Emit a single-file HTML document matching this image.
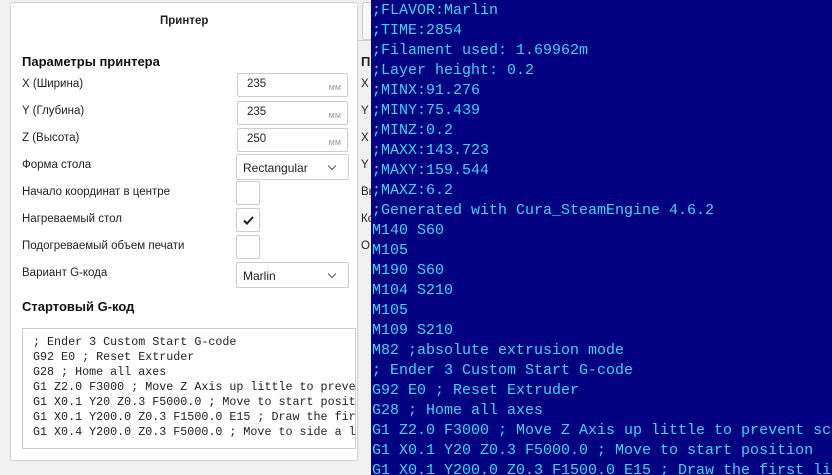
<!DOCTYPE html>
<html><head><meta charset="utf-8"><style>
*{margin:0;padding:0;box-sizing:border-box}
body{width:832px;height:475px;overflow:hidden;background:#f0f0f0;position:relative;font-family:"Liberation Sans","Noto Sans CJK SC",sans-serif;font-size:11.5px;color:#222}
.card{position:absolute;left:10px;top:2px;width:348px;height:459px;background:#fff;border:1px solid #d0d0d0;border-radius:3px}
.tab2{position:absolute;left:362px;top:2px;width:20px;height:38px;background:#f7f7f7;border:1px solid #ccc;border-radius:3px}
.sep{position:absolute;left:358px;top:40px;width:14px;height:1px;background:#d0d0d0}
.t{position:absolute;white-space:nowrap}
.h{font-weight:bold;font-size:13px;color:#111}
.in{position:absolute;background:#fff;border:1px solid #ccc;border-radius:2px}
.mm{position:absolute;right:6px;top:8px;font-size:9px;color:#999}
.chev{position:absolute;right:13px;top:8px;width:6px;height:6px;border-right:1.5px solid #555;border-bottom:1.5px solid #555;transform:rotate(45deg)}
.code{position:absolute;left:22px;top:328px;width:334px;height:121px;border:1px solid #ccc;background:#fff;overflow:hidden;font-family:"Liberation Mono",monospace;font-size:11.7px;line-height:15px;padding:6px 0 0 10px;white-space:pre;color:#222}
.blue{position:absolute;left:371px;top:0;width:461px;height:475px;background:#000080;overflow:hidden;font-family:"Liberation Mono",monospace;font-size:15px;line-height:20px;color:#3cd7f7;white-space:pre;padding:1px 0 0 1px}
</style></head><body>
<div class="card"></div>
<div class="tab2"></div>
<div class="sep"></div>
<div class="t" style="left:160px;top:15px;font-size:11.5px;font-weight:600">Принтер</div>
<div class="t h" style="left:22px;top:54px">Параметры принтера</div>
<div class="t" style="left:22px;top:78px">X (Ширина)</div>
<div class="t" style="left:22px;top:105px">Y (Глубина)</div>
<div class="t" style="left:22px;top:132px">Z (Высота)</div>
<div class="t" style="left:22px;top:159px">Форма стола</div>
<div class="t" style="left:22px;top:186px">Начало координат в центре</div>
<div class="t" style="left:22px;top:213px">Нагреваемый стол</div>
<div class="t" style="left:22px;top:240px">Подогреваемый объем печати</div>
<div class="t" style="left:22px;top:267px">Вариант G-кода</div>
<div class="in" style="left:237px;top:73px;width:111px;height:24px"><span class="t" style="left:9px;top:4px">235</span><span class="mm">мм</span></div>
<div class="in" style="left:237px;top:101px;width:111px;height:24px"><span class="t" style="left:9px;top:4px">235</span><span class="mm">мм</span></div>
<div class="in" style="left:237px;top:128px;width:111px;height:24px"><span class="t" style="left:9px;top:4px">250</span><span class="mm">мм</span></div>
<div class="in" style="left:236px;top:154px;width:113px;height:26px"><span class="t" style="left:6px;top:6px;font-size:12px">Rectangular</span><span class="chev"></span></div>
<div class="in" style="left:236px;top:181px;width:24px;height:24px"></div>
<div class="in" style="left:236px;top:208px;width:24px;height:24px"><svg style="position:absolute;left:6px;top:7px" width="11" height="9" viewBox="0 0 11 9"><path d="M1 4.5 L4 7.5 L10 1" fill="none" stroke="#222" stroke-width="2"/></svg></div>
<div class="in" style="left:236px;top:235px;width:24px;height:24px"></div>
<div class="in" style="left:236px;top:262px;width:113px;height:26px"><span class="t" style="left:6px;top:6px;font-size:12px">Marlin</span><span class="chev"></span></div>
<div class="t h" style="left:22px;top:299px">Стартовый G-код</div>
<div class="code">; Ender 3 Custom Start G-code
G92 E0 ; Reset Extruder
G28 ; Home all axes
G1 Z2.0 F3000 ; Move Z Axis up little to prevent
G1 X0.1 Y20 Z0.3 F5000.0 ; Move to start position
G1 X0.1 Y200.0 Z0.3 F1500.0 E15 ; Draw the first
G1 X0.4 Y200.0 Z0.3 F5000.0 ; Move to side a little</div>
<div class="t" style="left:361px;top:54px;font-weight:bold;font-size:13px">П</div>
<div class="t" style="left:361px;top:78px">X</div>
<div class="t" style="left:361px;top:105px">Y</div>
<div class="t" style="left:361px;top:132px">X</div>
<div class="t" style="left:361px;top:159px">Y</div>
<div class="t" style="left:361px;top:186px">Вы</div>
<div class="t" style="left:361px;top:213px">Ко</div>
<div class="t" style="left:361px;top:240px">О</div>
<div class="blue">;FLAVOR:Marlin
;TIME:2854
;Filament used: 1.69962m
;Layer height: 0.2
;MINX:91.276
;MINY:75.439
;MINZ:0.2
;MAXX:143.723
;MAXY:159.544
;MAXZ:6.2
;Generated with Cura_SteamEngine 4.6.2
M140 S60
M105
M190 S60
M104 S210
M105
M109 S210
M82 ;absolute extrusion mode
; Ender 3 Custom Start G-code
G92 E0 ; Reset Extruder
G28 ; Home all axes
G1 Z2.0 F3000 ; Move Z Axis up little to prevent scratching
G1 X0.1 Y20 Z0.3 F5000.0 ; Move to start position
G1 X0.1 Y200.0 Z0.3 F1500.0 E15 ; Draw the first line</div>
</body></html>
